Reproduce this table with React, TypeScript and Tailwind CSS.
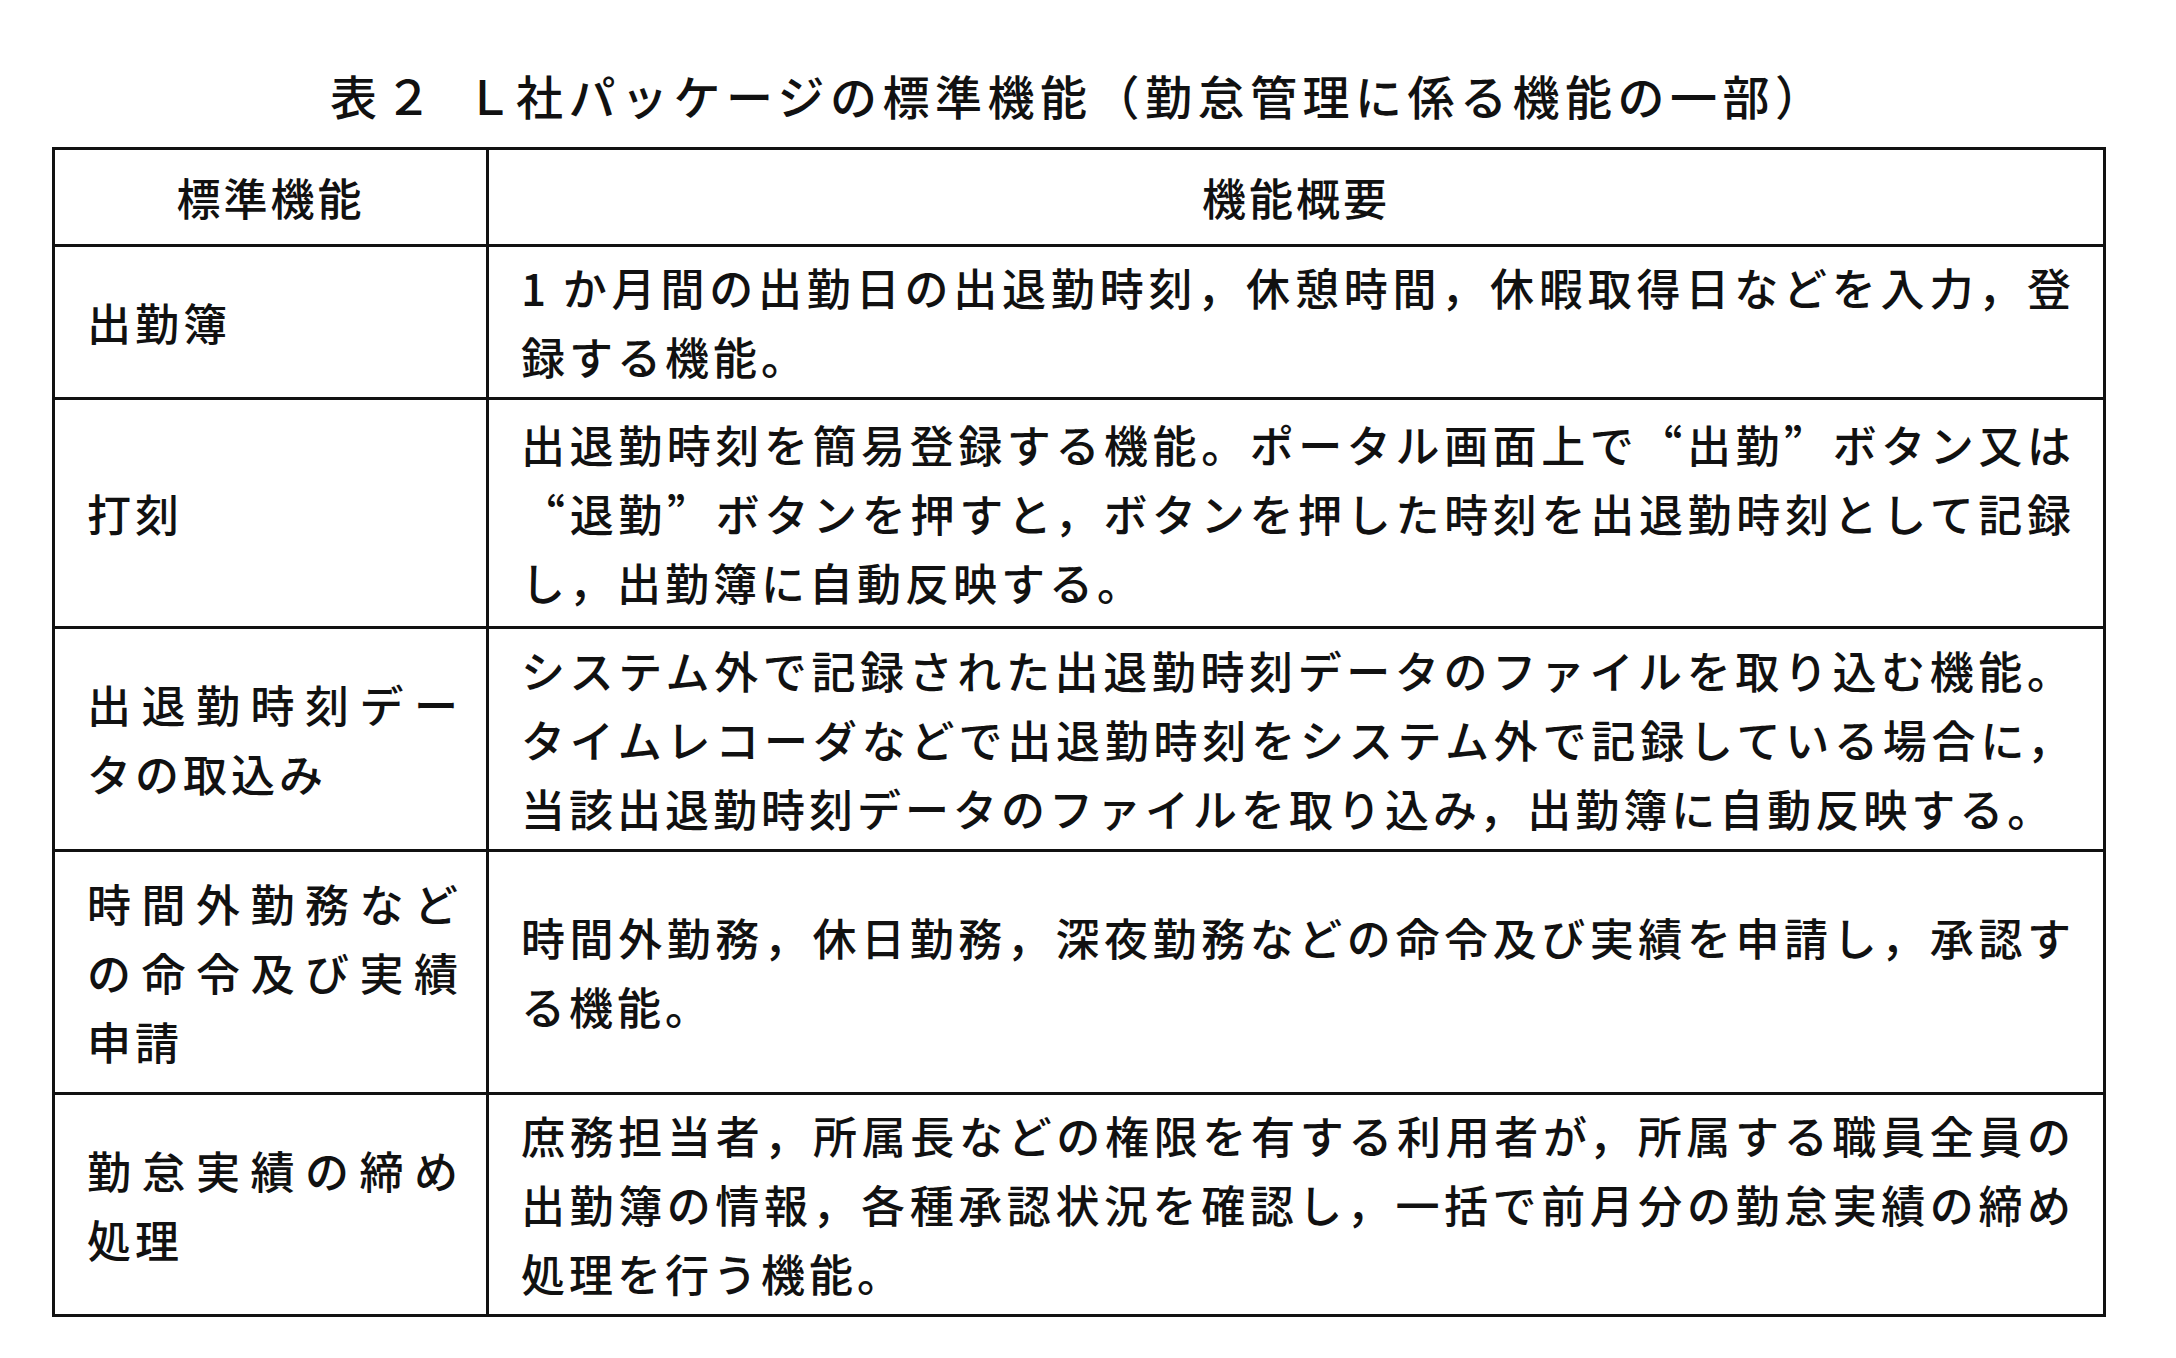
import React from "react";

type Line = { t: React.ReactNode; j?: boolean };
type Row = { h: string; left: Line[]; right: Line[] };

function Q({ children }: { children: React.ReactNode }) {
  return <span className="[font-feature-settings:'fwid']">{children}</span>;
}

const rows: Row[] = [
  {
    h: "h-[153px]",
    left: [{ t: "出勤簿" }],
    right: [
      { t: "1 か月間の出勤日の出退勤時刻，休憩時間，休暇取得日などを入力，登", j: true },
      { t: "録する機能。" },
    ],
  },
  {
    h: "h-[229px]",
    left: [{ t: "打刻" }],
    right: [
      {
        t: (
          <>
            出退勤時刻を簡易登録する機能。ポータル画面上で<Q>“</Q>出勤<Q>”</Q>ボタン又は
          </>
        ),
        j: true,
      },
      {
        t: (
          <>
            <Q>“</Q>退勤<Q>”</Q>ボタンを押すと，ボタンを押した時刻を出退勤時刻として記録
          </>
        ),
        j: true,
      },
      { t: "し，出勤簿に自動反映する。" },
    ],
  },
  {
    h: "h-[223px]",
    left: [{ t: "出退勤時刻デー", j: true }, { t: "タの取込み" }],
    right: [
      { t: "システム外で記録された出退勤時刻データのファイルを取り込む機能。", j: true },
      { t: "タイムレコーダなどで出退勤時刻をシステム外で記録している場合に，", j: true },
      { t: "当該出退勤時刻データのファイルを取り込み，出勤簿に自動反映する。" },
    ],
  },
  {
    h: "h-[243px]",
    left: [
      { t: "時間外勤務など", j: true },
      { t: "の命令及び実績", j: true },
      { t: "申請" },
    ],
    right: [
      { t: "時間外勤務，休日勤務，深夜勤務などの命令及び実績を申請し，承認す", j: true },
      { t: "る機能。" },
    ],
  },
  {
    h: "h-[222px]",
    left: [{ t: "勤怠実績の締め", j: true }, { t: "処理" }],
    right: [
      { t: "庶務担当者，所属長などの権限を有する利用者が，所属する職員全員の", j: true },
      { t: "出勤簿の情報，各種承認状況を確認し，一括で前月分の勤怠実績の締め", j: true },
      { t: "処理を行う機能。" },
    ],
  },
];

function Lines({ lines }: { lines: Line[] }) {
  return (
    <div className="w-full flex flex-col">
      {lines.map((l, i) =>
        l.j ? (
          <div
            key={i}
            className="text-justify [text-align-last:justify] tracking-[2px] leading-[69px]"
          >
            {l.t}
          </div>
        ) : (
          <div key={i} className="tracking-[4px] leading-[69px] whitespace-nowrap">
            {l.t}
          </div>
        )
      )}
    </div>
  );
}

export default function App() {
  return (
    <div
      lang="ja"
      className="w-[2176px] h-[1358px] bg-white text-[#111111] font-medium [font-family:'Noto_Sans_CJK_JP','Noto_Sans_CJK_SC',sans-serif] pt-[67px]"
    >
      <div className="h-[56px] pl-[330px] flex items-center text-[47px] leading-[56px] whitespace-nowrap">
        <span>表</span>
        <span className="ml-[8px]">２</span>
        <span className="ml-[34px]">Ｌ</span>
        <span className="ml-[3px] tracking-[5.5px]">
          社パッケージの標準機能（勤怠管理に係る機能の一部）
        </span>
      </div>
      <div className="mt-[24px] ml-[52px] w-[2054px] h-[1170px] border-[3px] border-[#111111] flex flex-col text-[44px]">
        <div className="h-[94px] flex">
          <div className="w-[434px] shrink-0 border-r-[3px] border-[#111111] flex items-center justify-center tracking-[3px] leading-[56px]">
            標準機能
          </div>
          <div className="flex-1 flex items-center justify-center tracking-[3px] leading-[56px]">
            機能概要
          </div>
        </div>
        {rows.map((r, i) => (
          <div key={i} className={`${r.h} flex border-t-[3px] border-[#111111]`}>
            <div className="w-[434px] shrink-0 border-r-[3px] border-[#111111] flex items-center pl-[32px] pr-[26px]">
              <Lines lines={r.left} />
            </div>
            <div className="flex-1 flex items-center pl-[32px] pr-[30px]">
              <Lines lines={r.right} />
            </div>
          </div>
        ))}
      </div>
    </div>
  );
}
